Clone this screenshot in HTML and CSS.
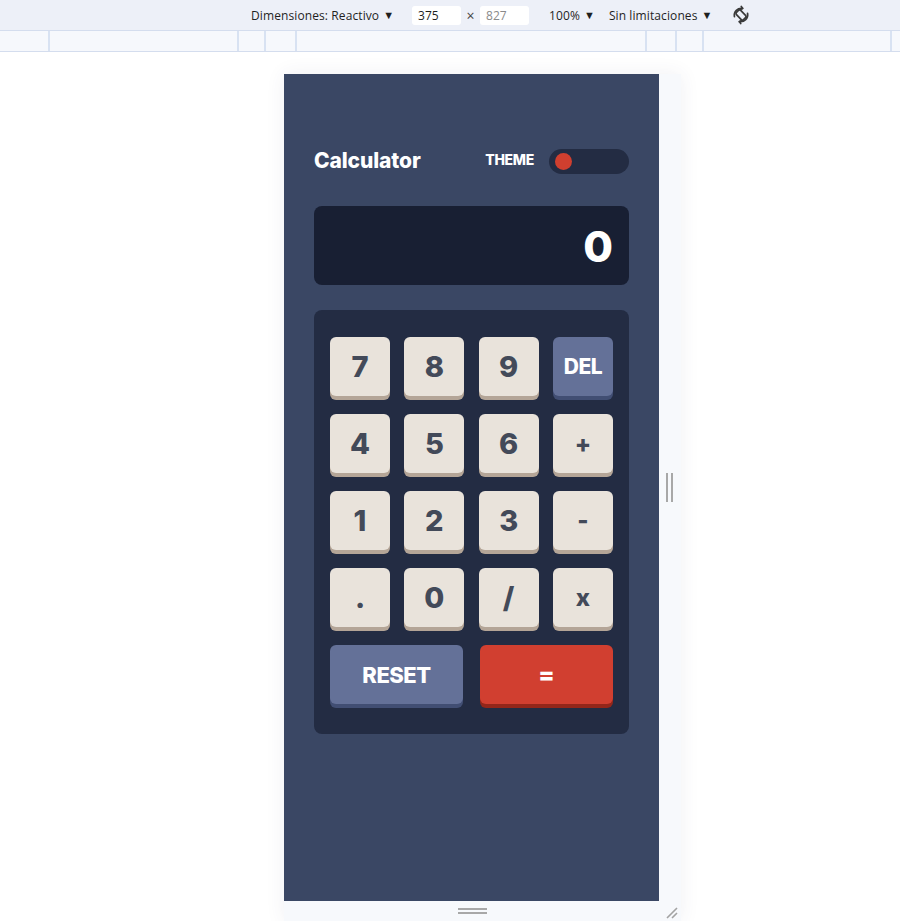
FILE: index.html
```html
<!DOCTYPE html>
<html lang="es">
<head>
<meta charset="utf-8">
<title>Calculator</title>
<link rel="stylesheet" href="styles.css">
</head>
<body>
<div class="toolbar">
  <span class="tb-item">Dimensiones: Reactivo<span class="caret">▼</span></span>
  <span class="tb-input">375</span>
  <span class="tb-times">×</span>
  <span class="tb-input tb-muted">827</span>
  <span class="tb-item tb-zoom">100%<span class="caret">▼</span></span>
  <span class="tb-item tb-throttle">Sin limitaciones<span class="caret">▼</span></span>
  <svg class="tb-rotate" viewBox="0 0 20 20" width="20" height="20">
    <g transform="rotate(-45 10 10)" fill="none" stroke="#3a3a3a" stroke-width="1.7" stroke-linecap="round">
      <rect x="7" y="5" width="6" height="10" rx="1.6"/>
      <path d="M4.2 6.5 A7 7 0 0 1 15.8 6.5"/>
      <path d="M15.8 13.5 A7 7 0 0 1 4.2 13.5"/>
      <path d="M15.8 6.5 L13.6 5.6 M15.8 6.5 L16.2 4.2"/>
      <path d="M4.2 13.5 L6.4 14.4 M4.2 13.5 L3.8 15.8"/>
    </g>
  </svg>
</div>
<div class="ruler">
  <span></span><span></span><span></span><span></span><span></span><span></span><span></span><span></span><span class="last"></span>
</div>
<div class="stage">
  <div class="device">
    <main class="calc">
      <header class="calc-header">
        <h1 class="title">Calculator</h1>
        <div class="theme">
          <span class="theme-label">THEME</span>
          <div class="toggle"><span class="knob"></span></div>
        </div>
      </header>
      <div class="screen">0</div>
      <div class="keypad">
        <div class="keys">
          <button class="key">7</button>
          <button class="key">8</button>
          <button class="key">9</button>
          <button class="key key-alt key-del">DEL</button>
          <button class="key">4</button>
          <button class="key">5</button>
          <button class="key">6</button>
          <button class="key key-op">+</button>
          <button class="key">1</button>
          <button class="key">2</button>
          <button class="key">3</button>
          <button class="key key-op">-</button>
          <button class="key">.</button>
          <button class="key">0</button>
          <button class="key">/</button>
          <button class="key key-op">x</button>
        </div>
        <div class="bottom-row">
          <button class="key key-alt key-reset">RESET</button>
          <button class="key key-eq">=</button>
        </div>
      </div>
    </main>
    <div class="side-strip"><span class="vhandle"></span></div>
    <div class="bottom-strip">
      <span class="hhandle"></span>
      <svg class="corner" viewBox="0 0 14 12" width="14" height="12"><path d="M2 11 L12 1 M7 11 L12 6" stroke="#a3a3a3" stroke-width="1.6" fill="none"/></svg>
    </div>
  </div>
</div>
</body>
</html>
```
FILE: styles.css
```css
* { box-sizing: border-box; }
html, body { margin: 0; padding: 0; }
body {
  background: #ffffff;
  width: 900px;
  height: 921px;
  overflow: hidden;
  font-family: "Noto Sans", "Open Sans", sans-serif;
}

/* devtools toolbar */
.toolbar {
  height: 30px;
  background: #edf0f8;
  display: flex;
  align-items: center;
  padding-left: 251px;
  font-size: 12px;
  color: #1f1f1f;
  font-family: "Open Sans", "Noto Sans", sans-serif;
  letter-spacing: 0.1px;
}
.caret {
  font-size: 11px;
  margin-left: 4px;
  position: relative;
  top: -1px;
  letter-spacing: 0;
}
.tb-input {
  width: 49px;
  height: 19px;
  background: #ffffff;
  border-radius: 3px;
  padding-left: 6px;
  line-height: 19px;
  margin-left: 18px;
  letter-spacing: 0;
}
.tb-muted { color: #8a8a8a; margin-left: 0; }
.tb-times { width: 19px; text-align: center; color: #444; font-size: 14px; }
.tb-zoom { margin-left: 20px; }
.tb-throttle { margin-left: 14px; }
.tb-rotate { margin-left: 19px; }

.ruler {
  height: 22px;
  background: #f6f8fc;
  border-top: 1px solid #d4ddee;
  border-bottom: 1px solid #d4ddee;
  display: grid;
  grid-template-columns: 50px 189px 27px 31px 350px 30px 27px 188px 1fr;
}
.ruler span { border-right: 2px solid #d8e2f2; }
.ruler span.last { border-right: none; }

/* device emulation area */
.stage {
  padding-top: 22px;
  padding-left: 284px;
}
.device {
  display: grid;
  grid-template-columns: 375px 22px;
  grid-template-rows: 827px 20px;
  width: 397px;
  box-shadow: 0 0 18px rgba(60, 70, 100, 0.08);
}
.side-strip {
  background: #f7f9fc;
  display: flex;
  align-items: center;
  justify-content: center;
}
.vhandle {
  width: 7px;
  height: 29px;
  border-left: 2px solid #a8a8a8;
  border-right: 2px solid #a8a8a8;
  margin-left: -2px;
}
.bottom-strip {
  grid-column: 1 / 3;
  background: #f7f9fc;
  display: flex;
  align-items: center;
  padding-left: 174px;
}
.hhandle {
  width: 29px;
  height: 6px;
  border-top: 2px solid #a8a8a8;
  border-bottom: 2px solid #a8a8a8;
}
.corner { margin-left: 178px; margin-top: 4px; }

/* calculator */
.calc {
  background: #3a4764;
  padding: 75px 30px 0;
  font-family: "Inter", "Lato", sans-serif;
  font-weight: 700;
}
.calc-header {
  height: 25px;
  display: flex;
  align-items: center;
  justify-content: space-between;
}
.title {
  margin: 0;
  color: #ffffff;
  font-size: 21px;
  font-weight: 800;
  letter-spacing: -0.1px;
  line-height: 1;
  position: relative;
  top: -1px;
}
.theme {
  display: flex;
  align-items: center;
  gap: 15px;
}
.theme-label {
  color: #ffffff;
  font-size: 14px;
  font-weight: 800;
  letter-spacing: -0.3px;
  position: relative;
  top: -2px;
}
.toggle {
  width: 80px;
  height: 25px;
  border-radius: 13px;
  background: #232c43;
  display: flex;
  align-items: center;
  padding-left: 6px;
}
.knob {
  width: 17px;
  height: 17px;
  border-radius: 50%;
  background: #d03f2f;
}

.screen {
  margin-top: 32px;
  height: 79px;
  border-radius: 8px;
  background: #181f33;
  color: #ffffff;
  display: flex;
  align-items: center;
  justify-content: flex-end;
  padding-right: 16px;
  font-size: 43px;
  font-weight: 800;
}

.keypad {
  margin-top: 25px;
  background: #232c43;
  border-radius: 8px;
  padding: 27px 16px 30px;
}
.keys {
  display: grid;
  grid-template-columns: repeat(4, 1fr);
  column-gap: 14.33px;
  row-gap: 18px;
}
.bottom-row {
  margin-top: 18px;
  display: grid;
  grid-template-columns: 1fr 1fr;
  column-gap: 17px;
}
.key {
  height: 59px;
  border: none;
  border-radius: 6px;
  background: #e9e3db;
  box-shadow: 0 4px 0 #b4a597;
  color: #434a59;
  font-family: "Inter", "Lato", sans-serif;
  font-weight: 800;
  font-size: 29px;
  padding: 0;
  line-height: 1;
}
.key-op { font-size: 24px; }
.key-alt {
  background: #647198;
  box-shadow: 0 4px 0 #414e73;
  color: #ffffff;
  font-size: 21px;
  letter-spacing: -0.5px;
}
.key-reset { font-size: 22px; }
.key-eq {
  background: #d13f30;
  box-shadow: 0 4px 0 #93261a;
  color: #ffffff;
  font-size: 24px;
}
```
